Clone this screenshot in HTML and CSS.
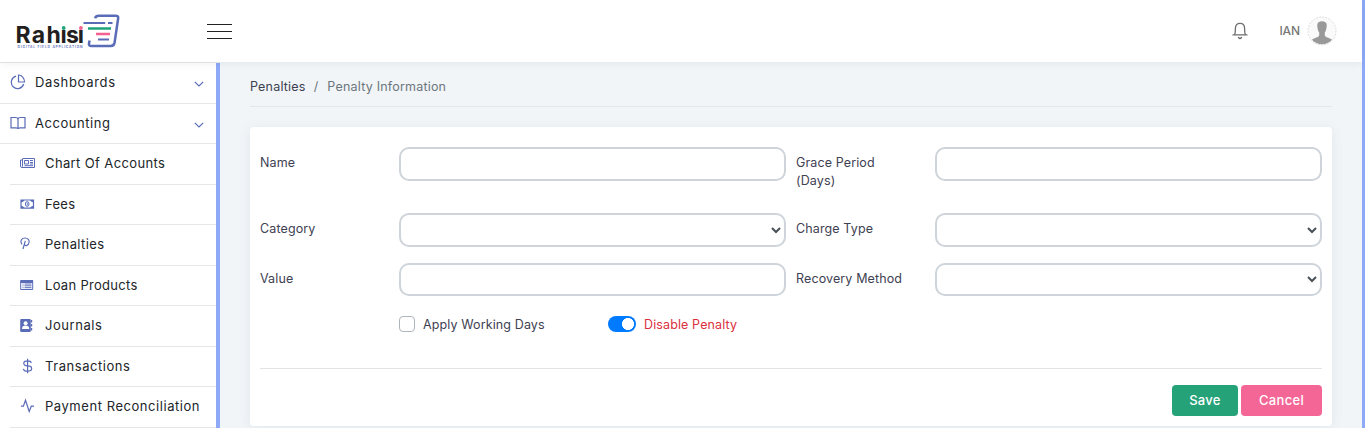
FILE: index.html
```html
<!DOCTYPE html>
<html lang="en">
<head>
<meta charset="utf-8">
<title>Penalty Information</title>
<link rel="stylesheet" href="styles.css">
</head>
<body>
<div class="app">
  <header class="topbar">
    <svg class="logo" width="110" height="44" viewBox="0 0 110 44">
      <text class="logo-name" x="5.500 21.800 36.500 50.600 55.900 67.800" y="34">Rahısı</text>
      <circle cx="53.700" cy="19" r="1.900" fill="#1fa37a"/>
      <circle cx="70.900" cy="19" r="1.900" fill="#f4608f"/>
      <text class="logo-tag" x="7.500" y="38.900" textLength="65" lengthAdjust="spacing">DIGITAL FIELD APPLICATION</text>
      <g fill="none" stroke="#5a6cb8" stroke-width="2.500">
        <path d="M85 9.200Q86 6.700 88.500 6.700H105.500Q108.500 6.700 108.200 9L104.600 33.500Q104 37 100.800 37H81.500Q78.500 37 79 34.500L79.600 31.500"/>
        <path stroke-width="2.200" d="M73.500 14H95.200M98 14H102.500M88 30.500H99"/>
      </g>
      <path d="M78 19.500H101" stroke="#1fa37a" stroke-width="2.500"/>
      <path d="M86 25H100" stroke="#f4608f" stroke-width="2.500"/>
    </svg>
    <div class="burger"><span></span><span></span><span></span></div>
    <div class="user">
      <svg class="bell" width="16" height="18" viewBox="0 0 16 18" fill="none" stroke="#6e6e6e" stroke-width="1.300" stroke-linecap="round">
        <path d="M1 12.900H15M2.700 12.700Q3.400 11 3.400 6.500C3.400 3 5.200 1.400 8 1.400S12.600 3 12.600 6.500Q12.600 11 13.300 12.700M6.500 15.500Q8 17.500 9.500 15.500"/>
      </svg>
      <span class="user-name">IAN</span>
      <svg class="avatar" width="30" height="30" viewBox="0 0 30 30">
        <circle cx="15" cy="15" r="14" fill="#fafafa" stroke="#d6d6d6" stroke-dasharray="1.500 1.500"/>
        <path d="M10.300 9.500C10 6.500 12 5.200 15 5.200S20 6.500 19.700 9.500C19.600 12.500 19 15 17.800 16.600V19.200C18.500 21.800 22.500 21.300 25 23.700A13.300 13.300 0 0 1 5 23.700C7.500 21.300 11.500 21.800 12.200 19.200V16.600C11 15 10.400 12.500 10.300 9.500Z" fill="#999"/>
      </svg>
    </div>
  </header>
  <div class="body">
    <nav class="sidebar">
      <div class="menu">
        <a class="item">
          <svg class="icon" width="16" height="16" viewBox="0 0 16 16"><path d="M6 2.200A6.300 6.300 0 1 0 13.700 10M8.500 1V8H14.500A6 7 0 0 0 8.500 1Z"/></svg>
          <span class="wide">Dashboards</span>
          <svg class="chev" width="10" height="6" viewBox="0 0 10 6"><path d="M.8.8 5 5 9.200.8"/></svg>
        </a>
        <a class="item">
          <svg class="icon" width="16" height="16" viewBox="0 0 16 16"><path d="M1 2.500H5.500Q8 2.500 8 4.500V14Q8 12.800 6 12.800H1ZM15 2.500H10.500Q8 2.500 8 4.500V14Q8 12.800 10 12.800H15Z"/></svg>
          <span class="medium">Accounting</span>
          <svg class="chev" width="10" height="6" viewBox="0 0 10 6"><path d="M.8.8 5 5 9.200.8"/></svg>
        </a>
        <a class="item sub">
          <svg class="icon" width="16" height="16" viewBox="0 0 16 16"><path stroke-width="1" d="M2.500 3.500H14.500V12.500H2Q.5 12.500.5 11V5H2.500M2.500 4V11.500M4.500 5.500H8.500V9H4.500ZM10 5.500H13M10 7.500H13M10 9H13M4.500 10.700H13"/></svg>
          <span class="close">Chart Of Accounts</span>
        </a>
        <a class="item sub">
          <svg class="icon" width="16" height="16" viewBox="0 0 16 16"><path d="M1 4H13.500V12.200H1Z"/><path fill="#5a6cb8" stroke="none" d="M1 4H4.500Q3.500 6 1 6.500ZM13.500 4H10Q11 6 13.500 6.500ZM1 12V9.800Q3.500 10 4.500 12ZM13.500 12V9.800Q11 10 10 12Z"/><ellipse cx="7.200" cy="8" rx="1.800" ry="2.400" stroke-width="1"/><path stroke-width=".8" d="M7.300 6.600V9.500"/></svg>
          <span>Fees</span>
        </a>
        <a class="item sub">
          <svg class="icon" width="16" height="16" viewBox="0 0 16 16"><path d="M2 8.300C-.5 4.500 2 2 5 2S9.500 4 9 6.500C8.500 9.500 5.500 10.500 4.300 8.500M5.300 4.800 3 13"/></svg>
          <span class="close">Penalties</span>
        </a>
        <a class="item sub">
          <svg class="icon" width="16" height="16" viewBox="0 0 16 16"><path stroke-width="1" d="M.7 3.700H12.700V12.500H.7ZM2.500 7H3.500M4.500 7H11.500M2.500 8.800H3.500M4.500 8.800H11.500M2.500 10.700H3.500M4.500 10.700H11.500"/><path fill="#5a6cb8" stroke="none" d="M.5 3H13V6H.5Z"/></svg>
          <span>Loan Products</span>
        </a>
        <a class="item sub">
          <svg class="icon" width="16" height="16" viewBox="0 0 16 16"><rect x=".2" y="2" width="10.600" height="13" rx="1" fill="#5a6cb8" stroke="none"/><path d="M11.600 3V5.500M11.600 7V9.500M11.600 11V13.500"/><circle cx="5.600" cy="6.300" r="2" fill="#fff" stroke="none"/><path d="M2 12Q2 8.600 5.600 8.600T9.200 12Z" fill="#fff" stroke="none"/></svg>
          <span class="medium">Journals</span>
        </a>
        <a class="item sub">
          <svg class="icon" width="16" height="16" viewBox="0 0 16 16"><path d="M7.600.8V15.200M11.300 4.800C11 3.300 9.800 2.800 7.600 2.800C2.500 2.800 2.500 7.800 7.600 7.800C13 7.800 13 13.200 7.600 13.200C5 13.200 3.700 12.500 3.400 10.800"/></svg>
          <span class="medium">Transactions</span>
        </a>
        <a class="item sub">
          <svg class="icon" width="16" height="16" viewBox="0 0 16 16"><path d="M1 8.200H3.400L5.500 2.200 9.200 13.500 11.300 8.200H14"/></svg>
          <span class="medium">Payment Reconciliation</span>
        </a>
      </div>
      <div class="side-scroll"></div>
    </nav>
    <main class="content">
      <div class="crumbs"><span class="crumb-link">Penalties</span><span class="crumb-sep">/</span><span>Penalty Information</span></div>
      <section class="card">
        <div class="row tall">
          <label>Name</label><input class="control" type="text">
          <label class="second">Grace Period<br>(Days)</label><input class="control" type="text">
        </div>
        <div class="row">
          <label>Category</label><select class="control"></select>
          <label class="second">Charge Type</label><select class="control"></select>
        </div>
        <div class="row">
          <label>Value</label><input class="control" type="text">
          <label class="second">Recovery Method</label><select class="control"></select>
        </div>
        <div class="options">
          <span class="check"></span><span class="check-text">Apply Working Days</span>
          <span class="switch"></span><span class="switch-text">Disable Penalty</span>
        </div>
        <div class="actions">
          <button class="btn save">Save</button>
          <button class="btn cancel">Cancel</button>
        </div>
      </section>
    </main>
  </div>
</div>
<div class="page-scroll"></div>
</body>
</html>
```
FILE: styles.css
```css
* { box-sizing: border-box; }
body {
  margin: 0;
  height: 428px;
  overflow: hidden;
  display: flex;
  background: #f1f5f8;
  font-family: Inter, "Open Sans", sans-serif;
  font-size: 12.5px;
  letter-spacing: .12px;
  color: #3e4152;
}
.app { flex: 1; display: flex; flex-direction: column; }
.page-scroll { width: 3px; background: #8da9f7; }
.topbar {
  position: relative;
  z-index: 1;
  height: 62px;
  flex: none;
  display: flex;
  align-items: center;
  background: #fff;
  box-shadow: 0 1px 8px rgba(60, 75, 90, .09);
}
.logo { margin-left: 10px; flex: none; }
.logo-name { font: 700 23px Inter, sans-serif; letter-spacing: 0; fill: #231f20; }
.logo-tag { font: 600 3.3px Inter, sans-serif; letter-spacing: 0; fill: #5a6cb8; }
.burger { margin-left: 87px; width: 25px; display: grid; gap: 6px; }
.burger span { height: 1px; background: #222; }
.user { margin-left: auto; margin-right: 25px; display: flex; align-items: center; }
.bell { margin-right: -2px; }
.user-name { margin: 0 7px 2px 33px; font-size: 12px; font-weight: 500; color: #777; letter-spacing: -.1px; }
.body { flex: 1; min-height: 0; display: flex; }
.sidebar { width: 220px; display: flex; background: #fff; border-top: 1px solid #e8e8e8; overflow: hidden; }
.menu { width: 216px; padding-top: .48px; }
.side-scroll { width: 4px; background: #8da9f7; }
.item {
  height: 40.5px;
  padding: 0 12px 2px 10px;
  border-bottom: 1px solid #e6e6e6;
  display: flex;
  align-items: center;
  font-size: 13px;
  letter-spacing: .3px;
  color: #212529;
  white-space: nowrap;
}
.item.sub { margin-left: 10px; }
.close { letter-spacing: .38px; }
.medium { letter-spacing: .55px; }
.wide { letter-spacing: .68px; }
.icon, .chev { fill: none; stroke: #5a6cb8; stroke-width: 1.2; flex: none; }
.icon { margin-right: 9px; }
.chev { margin: 4px 0 0 auto; }
.content { flex: 1; padding: 0 30px 0; }
.crumbs {
  height: 45px;
  padding-top: 17px;
  border-bottom: 1px solid #e3e7ea;
  line-height: 16px;
  letter-spacing: .2px;
  color: #6c757d;
}
.crumb-link { color: #3b3f50; }
.crumb-sep { margin: 0 9px 0 8px; }
.card {
  margin-top: 20px;
  height: 299px;
  padding: 20.4px 10px 0;
  background: #fff;
  border-radius: 4px;
  box-shadow: 0 2px 12px rgba(70, 90, 110, .09);
}
.row {
  display: grid;
  grid-template-columns: 139px 387px 149px 387px;
  height: 49.6px;
}
.row.tall { height: 66px; }
label { padding-top: 7px; line-height: 18px; }
.second { padding-left: 10px; }
.control {
  width: 387px;
  height: 33.4px;
  border: 2px solid #ced4da;
  border-radius: 10px;
  background: #fff;
  color: #495057;
}
.options { height: 55.4px; display: flex; align-items: flex-start; padding: 3.4px 0 0 139px; line-height: 18px; }
.check { width: 16px; height: 16px; border: 1px solid #adb5bd; border-radius: 4px; }
.check-text { width: 185px; margin-left: 8px; }
.switch {
  width: 28px;
  height: 16px;
  border-radius: 8px;
  background: radial-gradient(circle at 20px 8px, #fff 5.7px, #007bff 6.3px);
}
.switch-text { margin-left: 8px; color: #dc2f40; }
.actions {
  border-top: 1px solid #e3e3e3;
  padding-top: 16px;
  display: flex;
  justify-content: flex-end;
  gap: 3px;
}
.btn {
  height: 31px;
  padding: 0 0 1px;
  border: 0;
  border-radius: 4px;
  color: #fff;
  font: 500 13px Inter, sans-serif;
  letter-spacing: .3px;
}
.save { width: 66px; background: #26a278; }
.cancel { width: 81px; background: #f46696; }
```
